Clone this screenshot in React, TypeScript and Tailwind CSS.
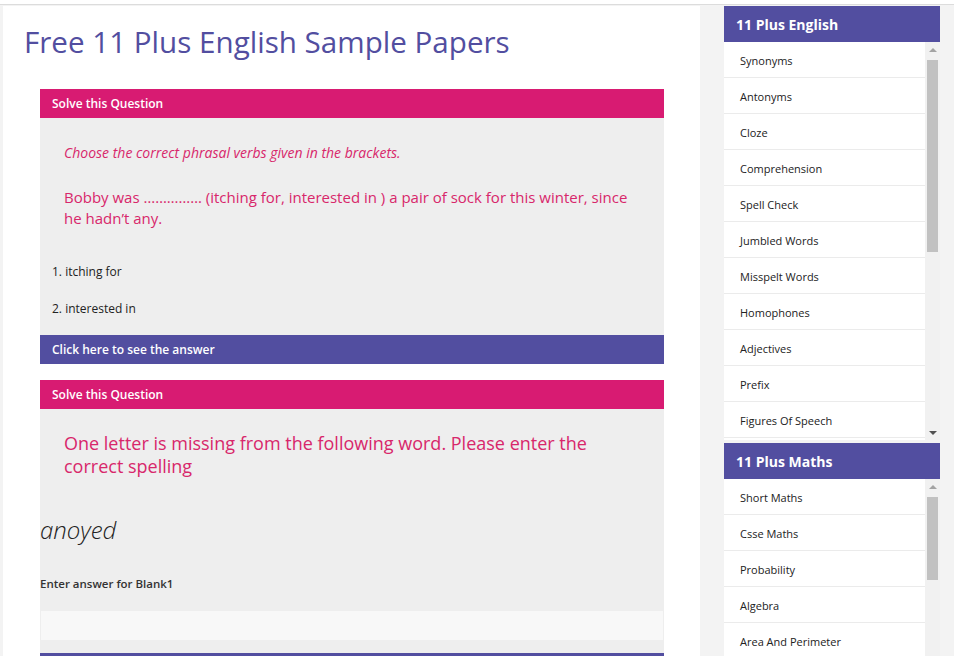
import React from "react";

const english = [
  "Synonyms",
  "Antonyms",
  "Cloze",
  "Comprehension",
  "Spell Check",
  "Jumbled Words",
  "Misspelt Words",
  "Homophones",
  "Adjectives",
  "Prefix",
  "Figures Of Speech",
];

const maths = ["Short Maths", "Csse Maths", "Probability", "Algebra", "Area And Perimeter"];

function Scrollbar({ thumbTop, thumbHeight }: { thumbTop: number; thumbHeight: number }) {
  return (
    <div className="relative w-[15px] shrink-0 bg-[#f1f1f1]">
      <div className="absolute left-[4px] top-[6px] h-0 w-0 border-x-[4px] border-b-[4px] border-x-transparent border-b-[#a3a3a3]" />
      <div className="absolute left-[2px] w-[11px] bg-[#c1c1c1]" style={{ top: thumbTop, height: thumbHeight }} />
      <div className="absolute bottom-[5px] left-[4px] h-0 w-0 border-x-[4px] border-t-[4px] border-x-transparent border-t-[#505050]" />
    </div>
  );
}

function SideBlock({ title, items, height, thumbTop, thumbHeight }: { title: string; items: string[]; height: number; thumbTop: number; thumbHeight: number }) {
  return (
    <div className="w-[216px]">
      <div className="flex h-[36px] items-center bg-[#524ea0] pl-[12px] text-[14px] font-bold text-white">{title}</div>
      <div className="flex overflow-hidden bg-white" style={{ height }}>
        <ul className="flex-1">
          {items.map((it) => (
            <li key={it} className="flex h-[36px] items-center border-b border-[#ebebeb] pl-[16px] pt-[4px] text-[11px] text-[#222]">
              {it}
            </li>
          ))}
        </ul>
        <Scrollbar thumbTop={thumbTop} thumbHeight={thumbHeight} />
      </div>
    </div>
  );
}

export default function App() {
  return (
    <div className="h-[656px] overflow-hidden bg-[#f3f3f3] font-['Open_Sans',sans-serif]">
      <div className="h-[4px] bg-white" />
      <div className="h-[1px] bg-[#dcdcdc]" />
      <div className="flex">
        <main className="ml-[3px] mt-[1px] h-[660px] w-[697px] bg-white pl-[37px] pr-[36px]">
          <h1 className="-ml-[16px] mt-[18px] text-[29.6px] font-medium leading-[36px] text-[#524ea0]">Free 11 Plus English Sample Papers</h1>

          <section className="mt-[29px] w-[624px] bg-[#eeeeee]">
            <div className="flex h-[29px] items-center bg-[#d81b72] pl-[12px] text-[12px] font-semibold text-white">Solve this Question</div>
            <div className="px-[24px] pt-[25px]">
              <p className="text-[14px] italic leading-[20px] text-[#d8276b]">Choose the correct phrasal verbs given in the brackets.</p>
              <p className="mt-[24px] text-[15px] leading-[21px] text-[#d8276b]">
                Bobby was …………… (itching for, interested in ) a pair of sock for this winter, since he hadn’t any.
              </p>
            </div>
            <ol className="pb-[17px] pl-[12px] pt-[34px] text-[12px] leading-[18px] text-[#222]">
              <li>1. itching for</li>
              <li className="mt-[19px]">2. interested in</li>
            </ol>
            <div className="flex h-[29px] items-center bg-[#524ea0] pl-[12px] text-[12px] font-semibold text-white">Click here to see the answer</div>
          </section>

          <section className="mt-[16px] w-[624px] bg-[#eeeeee]">
            <div className="flex h-[29px] items-center bg-[#d81b72] pl-[12px] text-[12px] font-semibold text-white">Solve this Question</div>
            <div className="px-[24px] pt-[23px]">
              <p className="text-[18px] leading-[23px] text-[#d8276b]">
                One letter is missing from the following word. Please enter the correct spelling
              </p>
            </div>
            <p className="mt-[36px] text-[24px] font-light italic leading-[32px] text-[#222]">anoyed</p>
            <p className="mt-[30px] text-[11.5px] font-semibold leading-[16px] text-[#333]">Enter answer for Blank1</p>
            <div className="px-[1px] pb-[13px] pt-[19px]">
              <div className="h-[29px] bg-[#f8f8f8]" />
            </div>
            <div className="h-[29px] bg-[#524ea0]" />
          </section>
        </main>

        <aside className="ml-[24px] mt-[1px] flex flex-col gap-[3px]">
          <SideBlock title="11 Plus English" items={english} height={398} thumbTop={18} thumbHeight={192} />
          <SideBlock title="11 Plus Maths" items={maths} height={200} thumbTop={18} thumbHeight={83} />
        </aside>
      </div>
    </div>
  );
}
